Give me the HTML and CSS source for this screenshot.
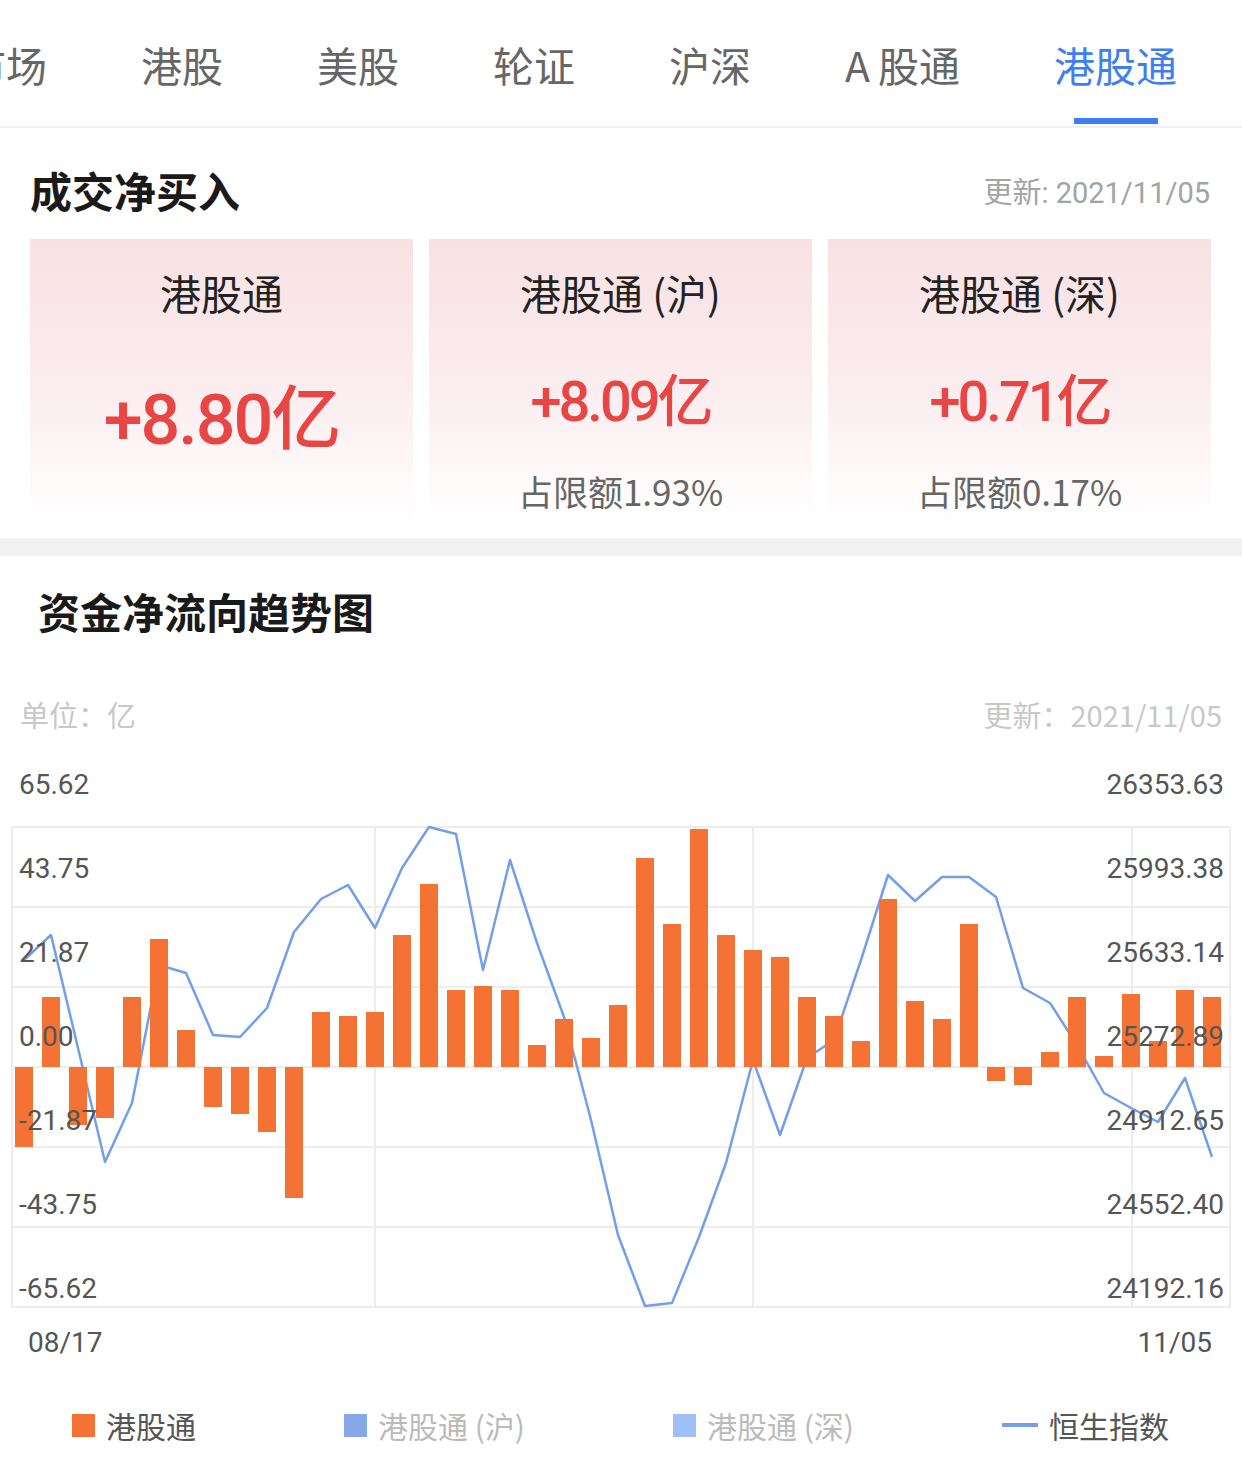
FILE: index.html
```html
<!DOCTYPE html>
<html lang="zh-CN">
<head>
    <meta charset="UTF-8">
    <meta name="viewport" content="width=device-width, initial-scale=1.0">
    <title>港股通</title>
    <link rel="stylesheet" href="styles.css">
</head>
<body>
    <nav class="tabs">
        <div class="tab">市场</div>
        <div class="tab">港股</div>
        <div class="tab">美股</div>
        <div class="tab">轮证</div>
        <div class="tab">沪深</div>
        <div class="tab"><span class="latin">A</span>股通</div>
        <div class="tab active">港股通</div>
    </nav>

    <div class="section-head">
        <h2 class="section-title">成交净买入</h2>
        <span class="update">更新: 2021/11/05</span>
    </div>

    <div class="cards">
        <div class="card main">
            <div class="card-title">港股通</div>
            <div class="value">+8.80亿</div>
        </div>
        <div class="card">
            <div class="card-title">港股通 (沪)</div>
            <div class="value">+8.09亿</div>
            <div class="quota">占限额1.93%</div>
        </div>
        <div class="card">
            <div class="card-title">港股通 (深)</div>
            <div class="value">+0.71亿</div>
            <div class="quota">占限额0.17%</div>
        </div>
    </div>

    <div class="divider"></div>

    <h2 class="chart-title">资金净流向趋势图</h2>
    <div class="chart-meta">
        <span>单位：亿</span>
        <span>更新：2021/11/05</span>
    </div>

    <svg class="chart" viewBox="0 764 1242 606" xmlns="http://www.w3.org/2000/svg">
        <!-- grid -->
        <g class="grid">
            <rect x="12" y="827" width="1218" height="480" fill="none"/>
            <line x1="12" y1="907" x2="1230" y2="907"/>
            <line x1="12" y1="987" x2="1230" y2="987"/>
            <line x1="12" y1="1067" x2="1230" y2="1067"/>
            <line x1="12" y1="1147" x2="1230" y2="1147"/>
            <line x1="12" y1="1227" x2="1230" y2="1227"/>
            <line x1="375" y1="827" x2="375" y2="1307"/>
            <line x1="753" y1="827" x2="753" y2="1307"/>
            <line x1="1132" y1="827" x2="1132" y2="1307"/>
        </g>

        <!-- hang seng index -->
        <polyline class="hsi" points="24,960 51,935 78,1048 105,1162 132,1103 159,965 186,973 213,1035 240,1037 267,1008 294,932 321,899 348,885 375,928 402,868 429,827 456,834 483,970 510,860 537,943 564,1017 591,1120 618,1235 645,1306 672,1303 699,1237 726,1163 753,1060 780,1135 807,1058 834,1040 861,960 888,875 915,901 942,877 969,877 996,897 1023,988 1050,1003 1077,1045 1104,1093 1131,1108 1158,1122 1185,1078 1212,1157"/>

        <!-- net buy bars -->
        <g class="bars">
            <rect x="15" y="1067" width="18" height="80"/>
            <rect x="42" y="997" width="18" height="70"/>
            <rect x="69" y="1067" width="18" height="58"/>
            <rect x="96" y="1067" width="18" height="51"/>
            <rect x="123" y="997" width="18" height="70"/>
            <rect x="150" y="939" width="18" height="128"/>
            <rect x="177" y="1030" width="18" height="37"/>
            <rect x="204" y="1067" width="18" height="40"/>
            <rect x="231" y="1067" width="18" height="47"/>
            <rect x="258" y="1067" width="18" height="65"/>
            <rect x="285" y="1067" width="18" height="131"/>
            <rect x="312" y="1012" width="18" height="55"/>
            <rect x="339" y="1016" width="18" height="51"/>
            <rect x="366" y="1012" width="18" height="55"/>
            <rect x="393" y="935" width="18" height="132"/>
            <rect x="420" y="884" width="18" height="183"/>
            <rect x="447" y="990" width="18" height="77"/>
            <rect x="474" y="986" width="18" height="81"/>
            <rect x="501" y="990" width="18" height="77"/>
            <rect x="528" y="1045" width="18" height="22"/>
            <rect x="555" y="1019" width="18" height="48"/>
            <rect x="582" y="1038" width="18" height="29"/>
            <rect x="609" y="1005" width="18" height="62"/>
            <rect x="636" y="858" width="18" height="209"/>
            <rect x="663" y="924" width="18" height="143"/>
            <rect x="690" y="829" width="18" height="238"/>
            <rect x="717" y="935" width="18" height="132"/>
            <rect x="744" y="950" width="18" height="117"/>
            <rect x="771" y="957" width="18" height="110"/>
            <rect x="798" y="997" width="18" height="70"/>
            <rect x="825" y="1016" width="18" height="51"/>
            <rect x="852" y="1041" width="18" height="26"/>
            <rect x="879" y="899" width="18" height="168"/>
            <rect x="906" y="1001" width="18" height="66"/>
            <rect x="933" y="1019" width="18" height="48"/>
            <rect x="960" y="924" width="18" height="143"/>
            <rect x="987" y="1067" width="18" height="14"/>
            <rect x="1014" y="1067" width="18" height="18"/>
            <rect x="1041" y="1052" width="18" height="15"/>
            <rect x="1068" y="997" width="18" height="70"/>
            <rect x="1095" y="1056" width="18" height="11"/>
            <rect x="1122" y="994" width="18" height="73"/>
            <rect x="1149" y="1041" width="18" height="26"/>
            <rect x="1176" y="990" width="18" height="77"/>
            <rect x="1203" y="997" width="18" height="70"/>
        </g>

        <!-- axis labels -->
        <g class="axis">
            <text x="19" y="794">65.62</text>
            <text x="19" y="878">43.75</text>
            <text x="19" y="962">21.87</text>
            <text x="19" y="1046">0.00</text>
            <text x="19" y="1130">-21.87</text>
            <text x="19" y="1214">-43.75</text>
            <text x="19" y="1298">-65.62</text>
        </g>
        <g class="axis right">
            <text x="1224" y="794">26353.63</text>
            <text x="1224" y="878">25993.38</text>
            <text x="1224" y="962">25633.14</text>
            <text x="1224" y="1046">25272.89</text>
            <text x="1224" y="1130">24912.65</text>
            <text x="1224" y="1214">24552.40</text>
            <text x="1224" y="1298">24192.16</text>
        </g>
        <g class="axis">
            <text x="28" y="1352">08/17</text>
        </g>
        <g class="axis right">
            <text x="1212" y="1352">11/05</text>
        </g>
    </svg>

    <div class="legend">
        <div class="legend-item on"><span class="swatch orange"></span>港股通</div>
        <div class="legend-item"><span class="swatch blue"></span>港股通 (沪)</div>
        <div class="legend-item"><span class="swatch light"></span>港股通 (深)</div>
        <div class="legend-item on"><span class="swatch line"></span>恒生指数</div>
    </div>
</body>
</html>
```

FILE: styles.css
```css
body {
    margin: 0;
    width: 1242px;
    overflow: hidden;
    background: #fff;
    font-family: "Noto Sans CJK SC", sans-serif;
    color: #222;
}

/* tab bar */
.tabs {
    display: flex;
    gap: 94px;
    height: 126px;
    margin-left: -35px;
    border-bottom: 2px solid #f0f0f0;
}

.tab {
    position: relative;
    padding-top: 6px;
    line-height: 116px;
    font-size: 41px;
    color: #666;
    white-space: nowrap;
}

.tab .latin {
    padding-right: 8px;
}

.tab.active {
    color: #3d7ff0;
}

.tab.active::after {
    content: "";
    position: absolute;
    left: 50%;
    bottom: 2px;
    width: 84px;
    height: 6px;
    margin-left: -41px;
    background: #3d7ff0;
}

/* net buy */
.section-head {
    display: flex;
    justify-content: space-between;
    align-items: center;
    height: 99px;
    padding: 12px 32px 0 30px;
}

.section-title {
    margin: 0;
    font-size: 42px;
    font-weight: bold;
    color: #1a1a1a;
}

.update {
    font-family: Roboto, "Noto Sans CJK SC", sans-serif;
    font-size: 29px;
    color: #a3a3a3;
}

.cards {
    display: grid;
    grid-template-columns: repeat(3, 1fr);
    gap: 16px;
    height: 285px;
    padding: 0 31px 0 30px;
}

.card {
    display: flex;
    flex-direction: column;
    align-items: center;
    background: linear-gradient(180deg, #f8e1e3 0%, #fbecee 50%, #fff 100%);
}

.card-title {
    margin-top: 25px;
    line-height: 56px;
    font-size: 41px;
    color: #222;
}

.value {
    margin-top: 42px;
    line-height: 80px;
    font-family: Roboto, "Noto Sans CJK SC", sans-serif;
    font-size: 56px;
    font-weight: 500;
    letter-spacing: -3px;
    color: #e84545;
}

.card.main .value {
    margin-top: 60px;
    font-size: 70px;
    letter-spacing: -2px;
}

.quota {
    margin-top: 24px;
    line-height: 50px;
    font-size: 35px;
    color: #666;
}

.divider {
    height: 18px;
    margin-top: 14px;
    background: #f2f2f2;
}

/* trend chart */
.chart-title {
    margin: 0;
    height: 110px;
    line-height: 110px;
    padding-left: 38px;
    font-size: 42px;
    font-weight: bold;
    color: #1a1a1a;
}

.chart-meta {
    display: flex;
    justify-content: space-between;
    align-items: center;
    height: 96px;
    padding: 0 20px;
    margin-bottom: 2px;
    font-size: 29px;
    color: #c8c8c8;
}

.chart {
    display: block;
    width: 1242px;
    height: 606px;
}

.grid rect,
.grid line {
    stroke: #ededed;
    stroke-width: 2;
}

.hsi {
    fill: none;
    stroke: #739eea;
    stroke-width: 2.5;
    stroke-linejoin: round;
}

.bars rect {
    fill: #f47334;
}

.axis text {
    font-family: Roboto, sans-serif;
    font-size: 28px;
    fill: #555;
}

.axis.right text {
    text-anchor: end;
}

/* legend */
.legend {
    display: flex;
    align-items: center;
    gap: 148px;
    height: 110px;
    padding-left: 72px;
}

.legend-item {
    display: flex;
    align-items: center;
    gap: 11px;
    font-size: 30px;
    color: #bbb;
    white-space: nowrap;
}

.legend-item.on {
    color: #555;
}

.swatch {
    width: 23px;
    height: 23px;
}

.swatch.orange {
    background: #f47334;
}

.swatch.blue {
    background: #86a7e8;
}

.swatch.light {
    background: #9ec0f6;
}

.swatch.line {
    width: 36px;
    height: 4px;
    background: #739eea;
}
```
